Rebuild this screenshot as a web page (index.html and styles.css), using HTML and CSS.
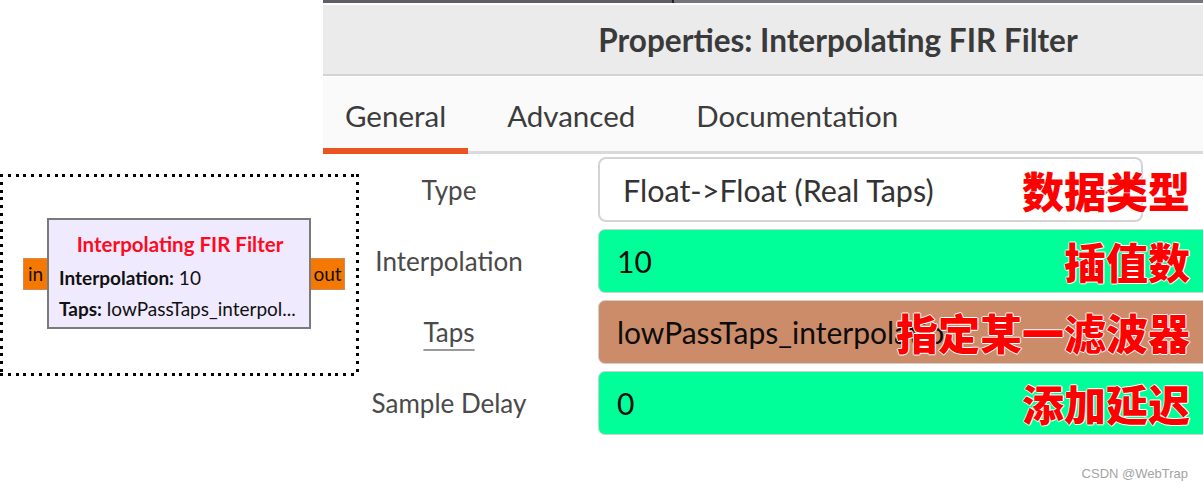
FILE: index.html
```html
<!DOCTYPE html>
<html lang="en">
<head>
<meta charset="utf-8">
<title>Properties: Interpolating FIR Filter</title>
<link rel="stylesheet" href="styles.css">
</head>
<body>
<div class="page">
  <div class="canvas">
    <div class="selection">
      <div class="node">
        <div class="port port-in">in</div>
        <div class="block">
          <div class="block-title">Interpolating FIR Filter</div>
          <div class="block-param"><b>Interpolation:</b> 10</div>
          <div class="block-param"><b>Taps:</b> lowPassTaps_interpol...</div>
        </div>
        <div class="port port-out">out</div>
      </div>
    </div>
  </div>

  <div class="panel">
    <div class="dialog">
      <div class="topline"><span class="seg-a"></span><span class="seg-b"></span></div>
      <div class="header">Properties: Interpolating FIR Filter</div>
      <div class="tabs">
        <div class="tab active">General</div>
        <div class="tab">Advanced</div>
        <div class="tab">Documentation</div>
      </div>
      <div class="form">
        <div class="row">
          <div class="label">Type</div>
          <div class="combo">
            <span class="combo-text">Float-&gt;Float (Real Taps)</span>
            <svg class="chevron" width="14" height="8" viewBox="0 0 14 8"><path d="M1 1 L7 7 L13 1" fill="none" stroke="#777" stroke-width="1.6"/></svg>
          </div>
          <div class="note">数据类型</div>
        </div>
        <div class="row">
          <div class="label">Interpolation</div>
          <div class="entry entry-int">10</div>
          <div class="note">插值数</div>
        </div>
        <div class="row">
          <div class="label"><span class="link">Taps</span></div>
          <div class="entry entry-vec">lowPassTaps_interpolation</div>
          <div class="note">指定某一滤波器</div>
        </div>
        <div class="row">
          <div class="label">Sample Delay</div>
          <div class="entry entry-int">0</div>
          <div class="note">添加延迟</div>
        </div>
      </div>
    </div>
  </div>

  <div class="watermark">CSDN @WebTrap</div>
</div>
</body>
</html>
```

FILE: styles.css
```css
* { box-sizing: border-box; }

html, body {
  margin: 0;
  padding: 0;
  background: #ffffff;
}

.page {
  position: relative;
  width: 1203px;
  height: 488px;
  overflow: hidden;
  display: flex;
  font-family: "Lato", "Noto Sans", sans-serif;
}

/* ---------- flowgraph canvas ---------- */
.canvas {
  flex: 0 0 323px;
  width: 323px;
  min-width: 0;
  padding-top: 174px;
  position: relative;
  z-index: 2;
}

.selection {
  width: 359px;
  height: 202px;
  padding-left: 23px;
  display: flex;
  align-items: center;
  background:
    repeating-linear-gradient(90deg, #000 0 3px, transparent 3px 7.8px) left top / 100% 3px no-repeat,
    repeating-linear-gradient(90deg, #000 0 3px, transparent 3px 7.8px) left bottom / 100% 3px no-repeat,
    repeating-linear-gradient(180deg, #000 0 3px, transparent 3px 7.8px) left top / 3px 100% no-repeat,
    repeating-linear-gradient(180deg, #000 0 3px, transparent 3px 7.8px) right top / 3px 100% no-repeat;
}

.node {
  display: flex;
  align-items: center;
  margin-top: -3px;
}

.port {
  height: 32px;
  background: #f57900;
  border: 1px solid #cf8a5e;
  color: #111;
  font-family: "Lato", "Noto Sans", sans-serif;
  font-size: 19px;
  line-height: 30px;
  text-align: center;
}
.port-in { width: 24px; border-right: none; }
.port-out { width: 34px; border-left: none; }

.block {
  width: 264px;
  height: 111px;
  background: #f0eaff;
  border: 2px solid #7a7a7a;
  padding: 10px 8px 0 10px;
  font-family: "Lato", "Noto Sans", sans-serif;
  color: #111;
}

.block-title {
  color: #ff0a1e;
  font-weight: 700;
  font-size: 20.5px;
  line-height: 28px;
  text-align: center;
  margin-bottom: 4px;
}

.block-param {
  font-size: 19px;
  line-height: 31px;
  white-space: nowrap;
}
.block-param b { font-weight: 700; }

/* ---------- properties dialog ---------- */
.panel {
  flex: 1 1 auto;
  min-width: 0;
  overflow: hidden;
}

.dialog {
  width: 1030px;
  display: flex;
  flex-direction: column;
}

.topline {
  display: flex;
  height: 3px;
  margin-bottom: 2px;
}
.seg-a { width: 351px; background: #5e5e66; border-right: 2px solid #222; }
.seg-b { flex: 1; background: #75757c; }

.header {
  height: 71px;
  background: #ebebeb;
  border-bottom: 2px solid #d3d3d3;
  display: flex;
  align-items: center;
  justify-content: center;
  font-size: 31.5px;
  font-weight: 700;
  color: #3a3a3a;
}

.tabs {
  height: 77px;
  margin-top: 1px;
  background: #fafafa;
  box-shadow: inset 0 -3px 0 #dadada;
  display: flex;
  gap: 17px;
}

.tab {
  padding: 0 22px;
  display: flex;
  align-items: center;
  font-size: 29.5px;
  color: #3c3c3c;
}
.tab.active { box-shadow: inset 0 -6px 0 #e95420; }

.form {
  padding-top: 3px;
  display: flex;
  flex-direction: column;
  gap: 6px;
}

.row {
  position: relative;
  height: 65px;
  display: grid;
  grid-template-columns: 252px 1fr;
  column-gap: 23px;
  align-items: center;
}

.label {
  text-align: center;
  font-size: 26px;
  color: #4a4a4a;
}

.link {
  text-decoration: underline;
  text-decoration-color: #9a9a9a;
  text-decoration-thickness: 2px;
  text-underline-offset: 7px;
}

.combo {
  width: 545px;
  height: 65px;
  border: 2px solid #d4d4d4;
  border-radius: 8px;
  background: #fff;
  display: flex;
  align-items: center;
  padding: 0 24px 0 23px;
  font-size: 30.5px;
  color: #333;
}
.combo-text { flex: 1; }
.chevron { margin-right: 4px; }

.entry {
  height: 64px;
  border: 1px solid #cfcfcf;
  border-radius: 7px;
  display: flex;
  align-items: center;
  padding-left: 18px;
  font-size: 30px;
  color: #0c0c0c;
}
.entry-int { background: #00ff99; }
.entry-vec { background: #cc8c69; }

.note {
  position: absolute;
  right: 163px;
  top: 50%;
  transform: translateY(-50%);
  font-family: "Noto Sans CJK SC", sans-serif;
  font-weight: 900;
  font-size: 42px;
  line-height: 1;
  color: #ff0000;
  text-shadow: 1px 0 0 #fff, -1px 0 0 #fff, 0 1px 0 #fff, 0 -1px 0 #fff;
}

.watermark {
  position: absolute;
  right: 15px;
  bottom: 7px;
  font-family: "Liberation Sans", Arial, sans-serif;
  font-size: 13px;
  color: #a3a3a3;
}
```
